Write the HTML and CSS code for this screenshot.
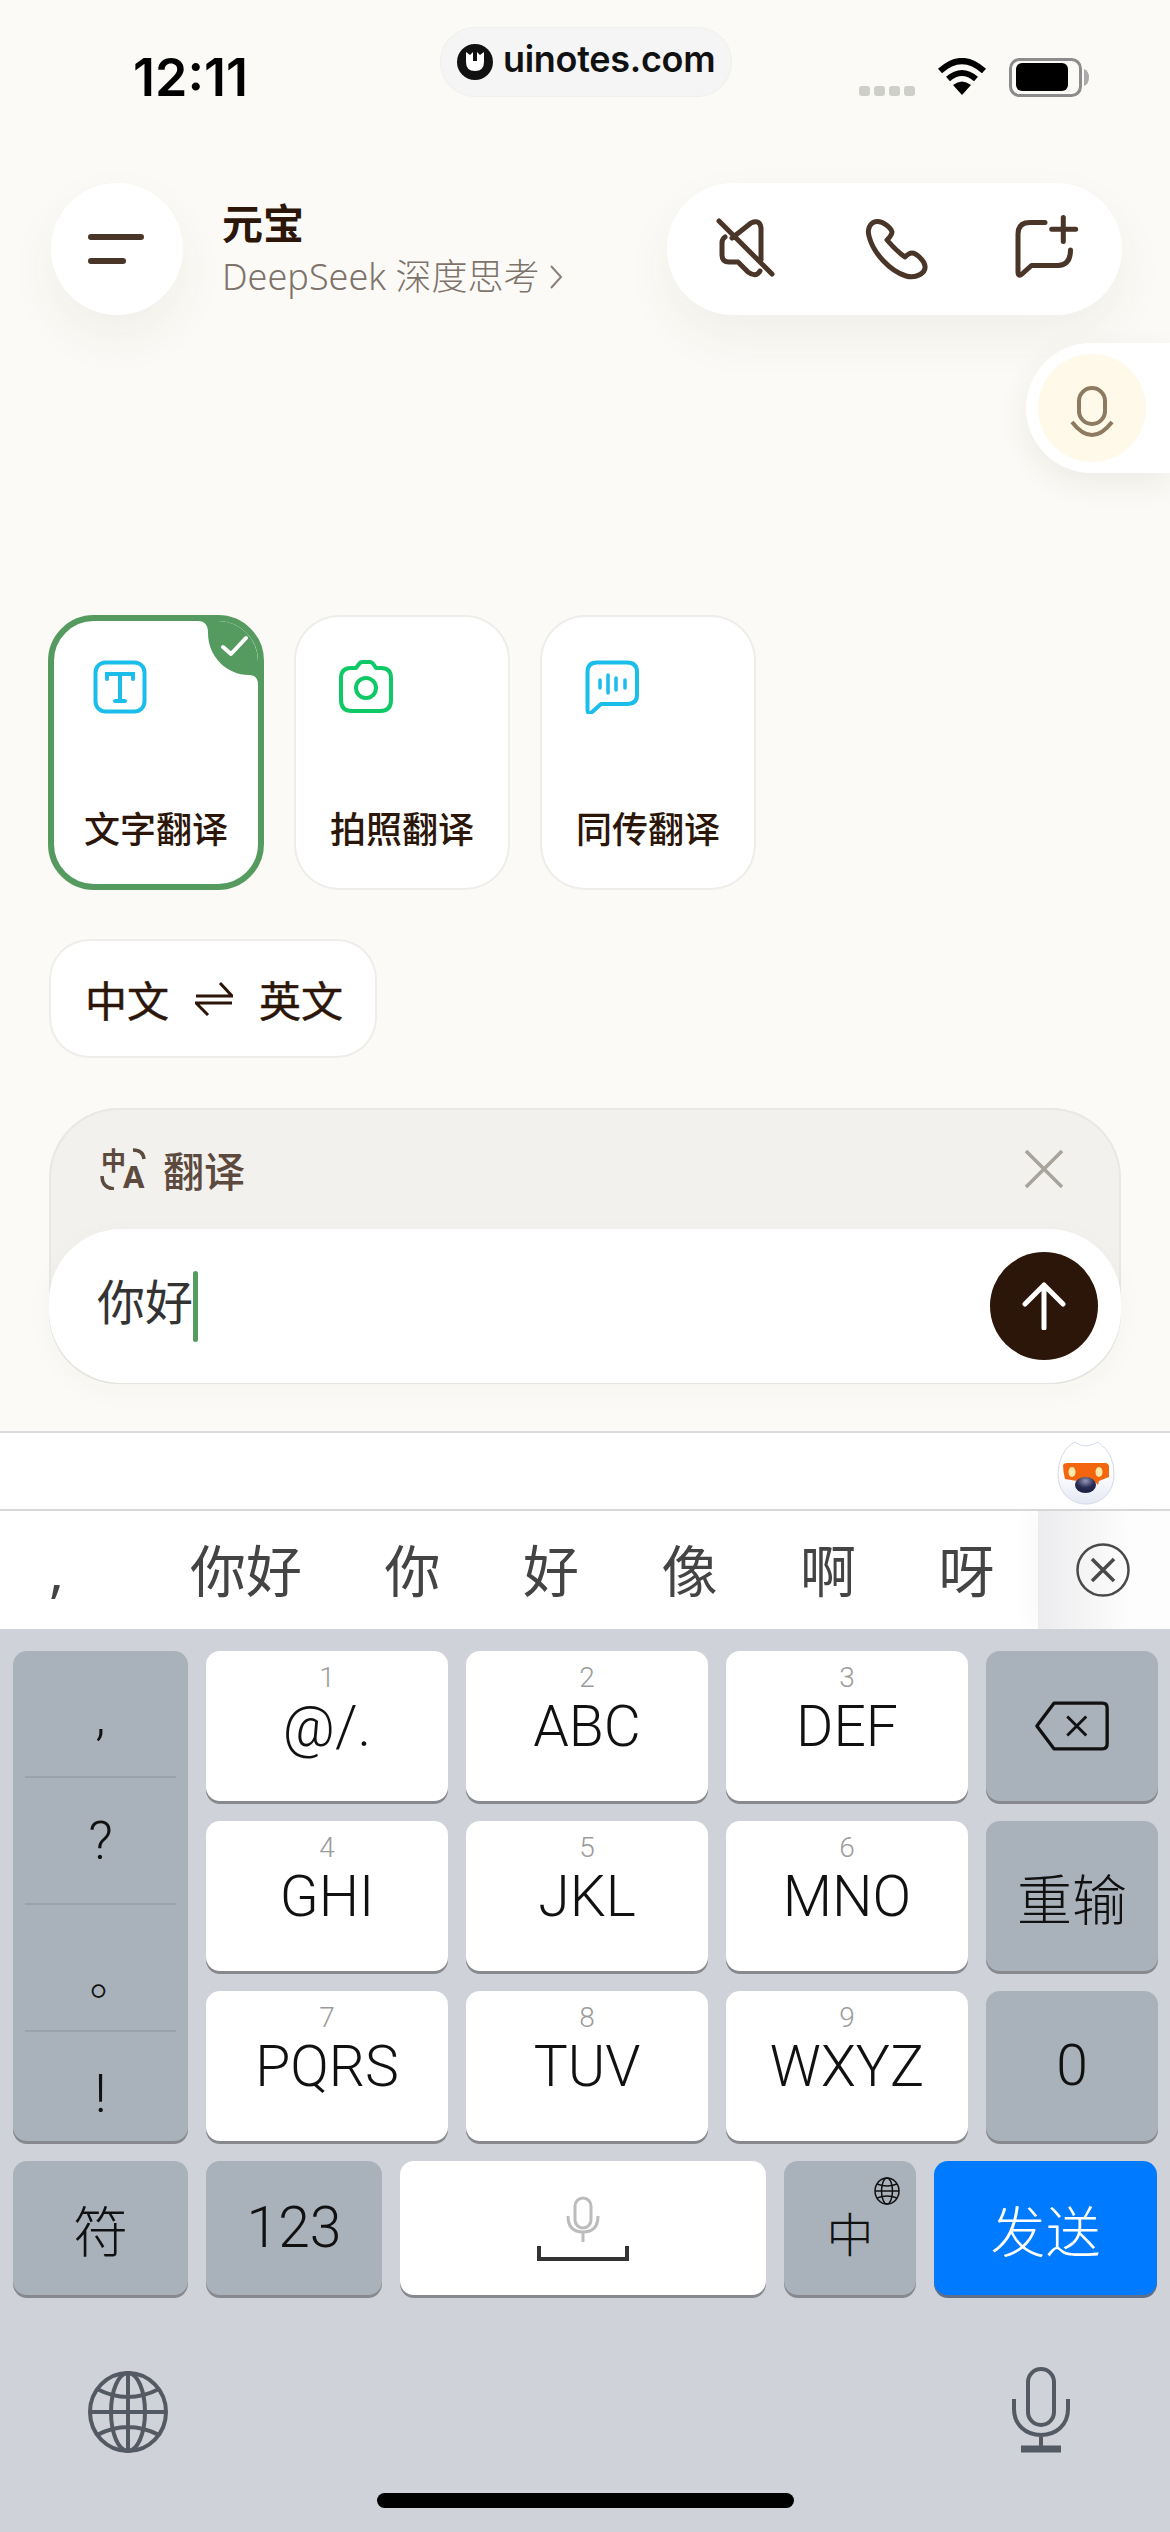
FILE: index.html
```html
<!DOCTYPE html>
<html lang="zh">
<head>
    <meta charset="UTF-8">
    <meta name="viewport" content="width=device-width, initial-scale=1.0">
    <title>元宝 翻译</title>
    <link rel="stylesheet" href="styles.css">
</head>
<body>
    <div class="chat">
        <div class="status">
            <span class="time">12:11</span>
            <div class="status-icons">
                <div class="cell"><i></i><i></i><i></i><i></i></div>
                <svg class="wifi" width="50" height="37" viewBox="0 0 50 37">
                    <path d="M3 13Q25-7 47 13M11 21Q25 9 39 21" fill="none" stroke="#000" stroke-width="6"/>
                    <path d="M16 27Q25 20 34 27L25 37Z"/>
                </svg>
                <svg class="battery" width="81" height="39" viewBox="0 0 81 39">
                    <rect x="1.500" y="1.500" width="70" height="36" rx="9" fill="none" stroke="#8c8c8c" stroke-width="3"/>
                    <rect x="7" y="5" width="52" height="28" rx="6"/>
                    <path d="M75 11Q80 13 80 19.500T75 28Z" fill="#aaa"/>
                </svg>
            </div>
        </div>

        <div class="watermark">
            <svg width="36" height="38" viewBox="0 0 36 38">
                <circle cx="18" cy="19" r="18" fill="#111"/>
                <path d="M9 9V19Q9 28 18 28T27 19V9L23 12 20 9V18H16V9L13 12Z" fill="#fff"/>
            </svg>
            <span>uinotes.com</span>
        </div>

        <div class="topbar">
            <div class="topbar-left">
                <div class="menu-btn">
                    <svg width="60" height="36" viewBox="0 0 60 36">
                        <path d="M4 6H54M4 30H36" stroke="#4a3529" stroke-width="6" stroke-linecap="round"/>
                    </svg>
                </div>
                <div class="title-block">
                    <div class="title">元宝</div>
                    <div class="subtitle">
                        DeepSeek 深度思考
                        <svg width="14" height="26" viewBox="0 0 14 26">
                            <path d="M2 2L12 13 2 24" fill="none" stroke="#8a8079" stroke-width="2"/>
                        </svg>
                    </div>
                </div>
            </div>
            <div class="actions">
                <svg class="action-icon" viewBox="0 0 60 60">
                    <path d="M4 2L57 55M17 19L36 4Q45 0 46 9V41M10 18Q7 20 7 24V36Q7 43 14 43H23L33 53Q41 59 45 52"/>
                </svg>
                <svg class="action-icon" viewBox="0 0 60 60">
                    <path d="M11 2.500C4 3 1 10 3 17C7 34 24 52 40 57C50 60 60 54 59 47C58 41 50 34 46 34C43 34 41 36 39 38C32 33 26 27 21 21C23 19 26 16 26 13C25 9 17 2 11 2.500Z"/>
                </svg>
                <svg class="action-icon" viewBox="0 0 60 60">
                    <path d="M28 3.500H13Q1 3.500 1 15V53Q1 58 5 55L14.500 46.500H41Q53.500 46 53.500 31M46.300-1.500V22.500M34.700 10.300H58.700"/>
                </svg>
            </div>
        </div>

        <div class="voice-bubble">
            <div class="voice-circle">
                <svg width="108" height="108" viewBox="0 0 108 108">
                    <rect x="41" y="34" width="26" height="36" rx="13" fill="none" stroke="#8d7a60" stroke-width="4"/>
                    <path d="M34 68Q54 94 74 68" fill="none" stroke="#8d7a60" stroke-width="4"/>
                </svg>
            </div>
        </div>

        <div class="cards">
            <div class="card card-active">
                <svg class="card-tab" width="60" height="64" viewBox="143 0 60 64">
                    <path d="M143 0Q153 0 153 12C153 36 172 54 194 54Q203 54 203 64V0Z" fill="#559b60"/>
                    <path d="M168 26L176 33 191 17" fill="none" stroke="#fff" stroke-width="4" stroke-linecap="round" stroke-linejoin="round"/>
                </svg>
                <svg class="card-icon" viewBox="0 0 54 54">
                    <rect x="2.500" y="2.500" width="49" height="49" rx="10" fill="none" stroke="#1bbdea" stroke-width="4"/>
                    <path d="M14 19V14H40V19M27 14V41M22 41H32" fill="none" stroke="#1bbdea" stroke-width="4" stroke-linecap="round"/>
                </svg>
                <div class="card-label">文字翻译</div>
            </div>
            <div class="card">
                <svg class="card-icon" viewBox="0 0 54 54">
                    <path d="M17 8L20 4Q21 2 24 2H31Q33 2 35 5L37 8H42Q52 8 52 18V40Q52 51 41 51H13Q2 51 2 40V18Q2 8 12 8Z" fill="none" stroke="#0fc866" stroke-width="4" stroke-linejoin="round"/>
                    <ellipse cx="27" cy="28" rx="10" ry="10" fill="none" stroke="#0fc866" stroke-width="4"/>
                </svg>
                <div class="card-label">拍照翻译</div>
            </div>
            <div class="card">
                <svg class="card-icon" viewBox="0 0 54 54">
                    <path d="M2.500 12Q2.500 2.500 12 2.500H42Q52 2.500 52 12V35Q52 44 42 44H16L6 53Q2.500 54 2.500 50Z" fill="none" stroke="#1bbdea" stroke-width="4" stroke-linejoin="round"/>
                    <path d="M15 20V28M23 15V33M31 18V30M40 20V28" stroke="#1bbdea" stroke-width="3.500" stroke-linecap="round"/>
                </svg>
                <div class="card-label">同传翻译</div>
            </div>
        </div>

        <div class="lang-pill">
            <span>中文</span>
            <svg width="38" height="34" viewBox="0 0 38 34">
                <path d="M1 14H37L25 1M37 21H1L13 33" fill="none" stroke="#2b1609" stroke-width="3"/>
            </svg>
            <span>英文</span>
        </div>

        <div class="input-box">
            <div class="input-head">
                <div class="input-tag">
                    <div class="tag-icon">
                        <span class="tag-zh">中</span>
                        <span class="tag-en">A</span>
                        <svg width="46" height="42" viewBox="0 0 46 42">
                            <path d="M33 2Q43 2 44 11M2 28Q2 40 14 41" fill="none" stroke="#5c4a3e" stroke-width="3.500"/>
                        </svg>
                    </div>
                    <span>翻译</span>
                </div>
                <svg width="40" height="40" viewBox="0 0 40 40">
                    <path d="M2 2L38 38M38 2L2 38" stroke="#a8a39b" stroke-width="3.500"/>
                </svg>
            </div>
            <div class="input-field">
                <span class="input-text">你好</span><span class="caret"></span>
                <div class="send-btn">
                    <svg width="44" height="48" viewBox="0 0 44 48">
                        <path d="M22 46V3M3 22L22 3 41 22" fill="none" stroke="#fff" stroke-width="5" stroke-linecap="round" stroke-linejoin="round"/>
                    </svg>
                </div>
            </div>
        </div>
    </div>

    <div class="tool-row">
        <svg class="fox" width="58" height="64" viewBox="0 0 58 64">
            <defs>
                <linearGradient id="foxBody" x1="0" y1="0" x2="0" y2="1">
                    <stop offset="0.500" stop-color="#fff"/>
                    <stop offset="1" stop-color="#e4e8f4"/>
                </linearGradient>
                <radialGradient id="foxNose" cx="0.5" cy="0.25" r="0.7">
                    <stop offset="0" stop-color="#9598b4"/>
                    <stop offset="0.6" stop-color="#2a2d52"/>
                    <stop offset="1" stop-color="#1d2040"/>
                </radialGradient>
            </defs>
            <path d="M17 1Q24 5 29 5T41 1Q57 12 57 33C57 52 44 63 29 63S1 52 1 33Q1 12 17 1Z" fill="url(#foxBody)" stroke="#d5daea"/>
            <path d="M6 24Q7 22 10 22H48Q52 22 52 26V36L42 40 41 44 37 40H20L8 38Q6 30 6 24Z" fill="#f3660f"/>
            <ellipse cx="15" cy="31" rx="3.500" ry="5" fill="#ffe9a8"/>
            <ellipse cx="42" cy="31" rx="3.500" ry="5" fill="#ffe9a8"/>
            <ellipse cx="28.500" cy="44" rx="10.500" ry="8" fill="url(#foxNose)"/>
        </svg>
    </div>

    <div class="candidates">
        <span class="cand-comma">,</span>
        <div class="cand-list">
            <span>你好</span>
            <span>你</span>
            <span>好</span>
            <span>像</span>
            <span>啊</span>
            <span>呀</span>
        </div>
        <div class="cand-more">
            <svg width="54" height="54" viewBox="0 0 54 54">
                <circle cx="27" cy="27" r="25.500" fill="none" stroke="#4a4a4a" stroke-width="2.500"/>
                <path d="M16 16L38 38M38 16L16 38" stroke="#4a4a4a" stroke-width="3.500"/>
            </svg>
        </div>
    </div>

    <div class="keyboard">
        <div class="key-grid">
            <div class="key key-gray key-punct">
                <span class="punct-comma">,</span>
                <span>?</span>
                <span class="cjk-dot">。</span>
                <span class="punct-bang">!</span>
            </div>
            <div class="key"><small>1</small>@/.</div>
            <div class="key"><small>2</small>ABC</div>
            <div class="key"><small>3</small>DEF</div>
            <div class="key key-gray">
                <svg width="76" height="50" viewBox="0 0 80 52">
                    <path d="M21 2H72Q77 2 77 7V45Q77 50 72 50H21L3 26Z" fill="none" stroke="#111" stroke-width="3.500" stroke-linejoin="round"/>
                    <path d="M35 16L55 36M55 16L35 36" stroke="#111" stroke-width="3"/>
                </svg>
            </div>
            <div class="key"><small>4</small>GHI</div>
            <div class="key"><small>5</small>JKL</div>
            <div class="key"><small>6</small>MNO</div>
            <div class="key key-gray key-zh">重输</div>
            <div class="key"><small>7</small>PQRS</div>
            <div class="key"><small>8</small>TUV</div>
            <div class="key"><small>9</small>WXYZ</div>
            <div class="key key-gray key-plain">0</div>
        </div>

        <div class="key-bottom">
            <div class="key key-gray key-zh key-fu">符</div>
            <div class="key key-gray key-plain key-num">123</div>
            <div class="key key-space">
                <svg width="92" height="66" viewBox="0 0 92 66">
                    <rect x="38" y="2" width="16" height="30" rx="8" fill="none" stroke="#bcbcbc" stroke-width="3"/>
                    <path d="M31 20Q31 36 46 36T61 20M46 36V46" fill="none" stroke="#bcbcbc" stroke-width="3"/>
                    <path d="M2 50V63H90V50" fill="none" stroke="#333" stroke-width="4"/>
                </svg>
            </div>
            <div class="key key-gray key-zh key-lang">
                中
                <svg class="small-globe" width="26" height="28" viewBox="0 0 26 28">
                    <ellipse cx="13" cy="14" rx="12" ry="13" fill="none" stroke="#111" stroke-width="1.500"/>
                    <ellipse cx="13" cy="14" rx="5.500" ry="13" fill="none" stroke="#111" stroke-width="1.500"/>
                    <path d="M1 14H25M3 7Q13 11 23 7M3 21Q13 17 23 21" fill="none" stroke="#111" stroke-width="1.500"/>
                </svg>
            </div>
            <div class="key key-send">发送</div>
        </div>

        <div class="kb-extra">
            <svg width="80" height="82" viewBox="0 0 80 82">
                <ellipse cx="40" cy="41" rx="38" ry="39" fill="none" stroke="#535a63" stroke-width="4"/>
                <ellipse cx="40" cy="41" rx="17" ry="39" fill="none" stroke="#535a63" stroke-width="4"/>
                <path d="M40 2V80M2 41H78M9 18Q40 34 71 18M9 64Q40 48 71 64" fill="none" stroke="#535a63" stroke-width="4"/>
            </svg>
            <svg width="58" height="86" viewBox="0 0 58 86">
                <rect x="16" y="2" width="26" height="56" rx="13" fill="none" stroke="#535a63" stroke-width="4"/>
                <path d="M2 32V42C2 58 14 68 29 68S56 58 56 42V32M29 68V80" fill="none" stroke="#535a63" stroke-width="4"/>
                <path d="M9 82H49" stroke="#535a63" stroke-width="7"/>
            </svg>
        </div>
        <div class="home-bar"></div>
    </div>
</body>
</html>
```

FILE: styles.css
```css
body {
    margin: 0;
    width: 1170px;
    height: 2532px;
    overflow: hidden;
    position: relative;
    background: #fbfaf6;
    font-family: "Noto Sans", "Noto Sans CJK SC", sans-serif;
    color: #2b1609;
}

.chat {
    height: 1431px;
    box-sizing: border-box;
}

/* status bar */
.status {
    height: 183px;
    box-sizing: border-box;
    padding: 58px 80px 0 133px;
    display: flex;
    justify-content: space-between;
    align-items: flex-start;
}

.time {
    font-family: "Inter", sans-serif;
    font-size: 52px;
    font-weight: 600;
    line-height: 40px;
    color: #000;
}

.status-icons {
    display: flex;
    align-items: flex-end;
    gap: 22px;
    height: 39px;
}

.cell {
    display: flex;
    gap: 4px;
    margin-bottom: 1px;
}

.cell i {
    width: 11px;
    height: 10px;
    border-radius: 3px;
    background: #cfcfca;
}

.wifi {
    margin-bottom: 2px;
}

.watermark {
    position: absolute;
    left: 440px;
    top: 27px;
    width: 292px;
    height: 70px;
    box-sizing: border-box;
    padding-left: 17px;
    border-radius: 35px;
    background: #f5f5f5;
    box-shadow: inset 0 0 0 1px #efefeb;
    display: flex;
    align-items: center;
    gap: 10px;
    font-family: "Inter", sans-serif;
    font-size: 36px;
    font-weight: 600;
    color: #111;
}

.watermark span {
    letter-spacing: -0.300px;
    margin-top: -6px;
}

/* top bar */
.topbar {
    height: 132px;
    padding: 0 48px 0 51px;
    display: flex;
    justify-content: space-between;
}

.topbar-left {
    display: flex;
    align-items: center;
    gap: 39px;
}

.menu-btn {
    width: 132px;
    height: 132px;
    border-radius: 50%;
    background: #fff;
    box-shadow: 0 22px 50px rgba(70, 60, 30, 0.06);
    display: flex;
    align-items: center;
    justify-content: center;
}

.title {
    font-size: 41px;
    font-weight: 700;
    line-height: 52px;
}

.subtitle {
    font-size: 36px;
    line-height: 50px;
    margin-top: 3px;
    color: #7d736b;
    font-weight: 300;
    display: flex;
    align-items: center;
    gap: 10px;
}

.actions {
    width: 455px;
    height: 132px;
    box-sizing: border-box;
    padding: 0 45px 0 48px;
    border-radius: 66px;
    background: #fff;
    box-shadow: 0 22px 50px rgba(70, 60, 30, 0.06);
    display: flex;
    align-items: center;
    justify-content: space-between;
}

.action-icon {
    width: 60px;
    height: 60px;
    overflow: visible;
}

.action-icon path {
    fill: none;
    stroke: #4a3529;
    stroke-width: 5;
    stroke-linecap: round;
    stroke-linejoin: round;
}

/* floating voice button, docked to the right edge */
.voice-bubble {
    position: absolute;
    left: 1026px;
    top: 343px;
    width: 144px;
    height: 130px;
    box-sizing: border-box;
    padding: 11px 0 0 12px;
    border-radius: 65px 0 0 65px;
    background: #fff;
    box-shadow: 0 10px 30px rgba(70, 60, 30, 0.08);
}

.voice-circle {
    width: 108px;
    height: 108px;
    border-radius: 50%;
    background: #fef9e8;
}

/* mode cards */
.cards {
    margin: 300px 0 0 48px;
    display: flex;
    gap: 30px;
}

.card {
    width: 216px;
    height: 275px;
    box-sizing: border-box;
    padding: 45px 0 0 45px;
    border-radius: 45px;
    background: #fff;
    box-shadow: inset 0 0 0 2px #eeedea;
    position: relative;
}

.card-active {
    border: 6px solid #559b60;
    box-shadow: none;
    padding: 39px 0 0 39px;
    border-radius: 46px;
    overflow: hidden;
}

.card-tab {
    position: absolute;
    top: 0;
    right: 0;
}

.card-icon {
    display: block;
    width: 54px;
    height: 54px;
}

.card-label {
    margin: 91px 0 0 -45px;
    width: 216px;
    text-align: center;
    font-size: 36px;
    line-height: 50px;
    font-weight: 500;
}

.card-active .card-label {
    margin-left: -39px;
    width: 204px;
}

.lang-pill {
    margin: 49px 0 0 49px;
    width: 328px;
    height: 119px;
    box-sizing: border-box;
    padding-left: 36px;
    border-radius: 40px;
    background: #fff;
    box-shadow: inset 0 0 0 2px #eeedea;
    display: flex;
    align-items: center;
    gap: 26px;
    font-size: 42px;
    -webkit-text-stroke: 0.500px #2b1609;
}

/* input box */
.input-box {
    margin: 50px 49px 0;
    height: 276px;
    border-radius: 70px;
    background: #f2f1ed;
    box-shadow: inset 0 0 0 2px #e9e8e4;
}

.input-head {
    height: 121px;
    box-sizing: border-box;
    padding: 0 57px 0 51px;
    display: flex;
    align-items: center;
    justify-content: space-between;
}

.input-tag {
    display: flex;
    align-items: center;
    gap: 17px;
    font-size: 41px;
    font-weight: 500;
    color: #5c4a3e;
}

.tag-icon {
    position: relative;
    width: 46px;
    height: 42px;
}

.tag-icon svg {
    position: absolute;
    left: 0;
    top: 0;
}

.tag-zh {
    position: absolute;
    left: 1px;
    top: -3px;
    font-size: 25px;
    font-weight: 700;
    line-height: 30px;
}

.tag-en {
    position: absolute;
    left: 23px;
    top: 13px;
    font-size: 31px;
    font-weight: 700;
    line-height: 30px;
}

.input-field {
    height: 154px;
    box-sizing: border-box;
    padding-left: 48px;
    border-radius: 72px;
    background: #fff;
    display: flex;
    align-items: center;
    box-shadow: 0 8px 30px rgba(70, 60, 30, 0.03);
}

.input-text {
    font-size: 48px;
    line-height: 60px;
    margin-top: -9px;
    color: #333;
}

.caret {
    width: 5px;
    height: 71px;
    border-radius: 3px;
    background: #559b60;
}

.send-btn {
    width: 108px;
    height: 108px;
    margin-left: auto;
    margin-right: 23px;
    border-radius: 50%;
    background: #2b1609;
    display: flex;
    align-items: center;
    justify-content: center;
}

/* row above the candidates */
.tool-row {
    height: 78px;
    box-sizing: border-box;
    padding-right: 55px;
    background: #fff;
    border-top: 2px solid #dcdcdf;
    display: flex;
    justify-content: flex-end;
    align-items: flex-start;
}

.fox {
    margin-top: 8px;
}

.candidates {
    height: 120px;
    box-sizing: border-box;
    background: #fff;
    border-top: 2px solid #d9d9dc;
    display: flex;
    align-items: center;
    position: relative;
}

.cand-comma {
    width: 190px;
    box-sizing: border-box;
    padding: 0 0 0 49px;
    font-size: 56px;
    line-height: 70px;
    font-family: "Noto Sans", sans-serif;
    color: #444;
}

.cand-list {
    display: flex;
    gap: 82.500px;
    font-size: 56px;
    line-height: 70px;
    color: #444;
}

.cand-more {
    position: absolute;
    top: 0;
    right: 0;
    width: 132px;
    height: 118px;
    padding-left: 38px;
    box-sizing: border-box;
    background: linear-gradient(to right, #ececee, #fdfdfd 70%);
    box-shadow: -12px 0 16px rgba(0, 0, 0, 0.02);
    display: flex;
    align-items: center;
}

/* keyboard */
.keyboard {
    height: 903px;
    box-sizing: border-box;
    padding: 22px 13px 0;
    background: #d0d2d9;
    position: relative;
}

.key-grid {
    display: grid;
    grid-template-columns: 175px 242px 242px 242px 172px;
    grid-template-rows: repeat(3, 153px);
    gap: 17px 18px;
}

.key {
    box-sizing: border-box;
    border-radius: 14px;
    background: #fff;
    box-shadow: 0 3px 0 #88898e;
    height: calc(100% - 3px);
    display: flex;
    flex-direction: column;
    align-items: center;
    font-family: "Roboto", "Noto Sans CJK SC", sans-serif;
    font-size: 57px;
    font-weight: 300;
    line-height: 62px;
    color: #111;
    padding-top: 14px;
}

.key small {
    font-size: 28px;
    line-height: 26px;
    color: #9b9b9b;
    margin-bottom: 5px;
}

.key-gray {
    background: #a9b2bb;
    justify-content: center;
    padding-top: 0;
}

.key-punct {
    grid-row: 1 / span 3;
    padding: 0 12px;
    justify-content: flex-start;
    align-items: stretch;
    font-size: 54px;
}

.key-punct span {
    height: 127px;
    flex: none;
    box-sizing: border-box;
    border-bottom: 2px solid #99a2ab;
    display: flex;
    align-items: center;
    justify-content: center;
}

.key-punct span:last-child {
    border-bottom: 0;
    height: 109px;
}

.punct-comma {
    padding-top: 4px;
}

.cjk-dot {
    font-family: "Noto Sans CJK SC", sans-serif;
    font-size: 46px;
    padding: 14px 0 0 24px;
}

.punct-bang {
    padding-top: 14px;
}

.key-zh {
    font-family: "Noto Sans CJK SC", sans-serif;
    font-weight: 300;
    font-size: 55px;
}

.key-bottom {
    margin-top: 17px;
    height: 137px;
    display: flex;
    gap: 18px;
}

.key-fu {
    width: 175px;
}

.key-num {
    width: 176px;
}

.key-space {
    width: 366px;
    padding-top: 35px;
}

.key-lang {
    width: 132px;
    position: relative;
    padding-top: 8px;
    font-size: 47px;
}

.small-globe {
    position: absolute;
    top: 16px;
    right: 16px;
}

.key-send {
    width: 223px;
    background: #007aff;
    color: #fff;
    font-family: "Noto Sans CJK SC", sans-serif;
    font-weight: 300;
    font-size: 55px;
    justify-content: center;
    padding-top: 0;
    box-shadow: 0 3px 0 #5f6f88;
}

.kb-extra {
    margin-top: 69px;
    padding: 0 87px 0 75px;
    display: flex;
    justify-content: space-between;
    align-items: flex-end;
}

.home-bar {
    position: absolute;
    left: 377px;
    top: 864px;
    width: 417px;
    height: 15px;
    border-radius: 8px;
    background: #000;
}
```
